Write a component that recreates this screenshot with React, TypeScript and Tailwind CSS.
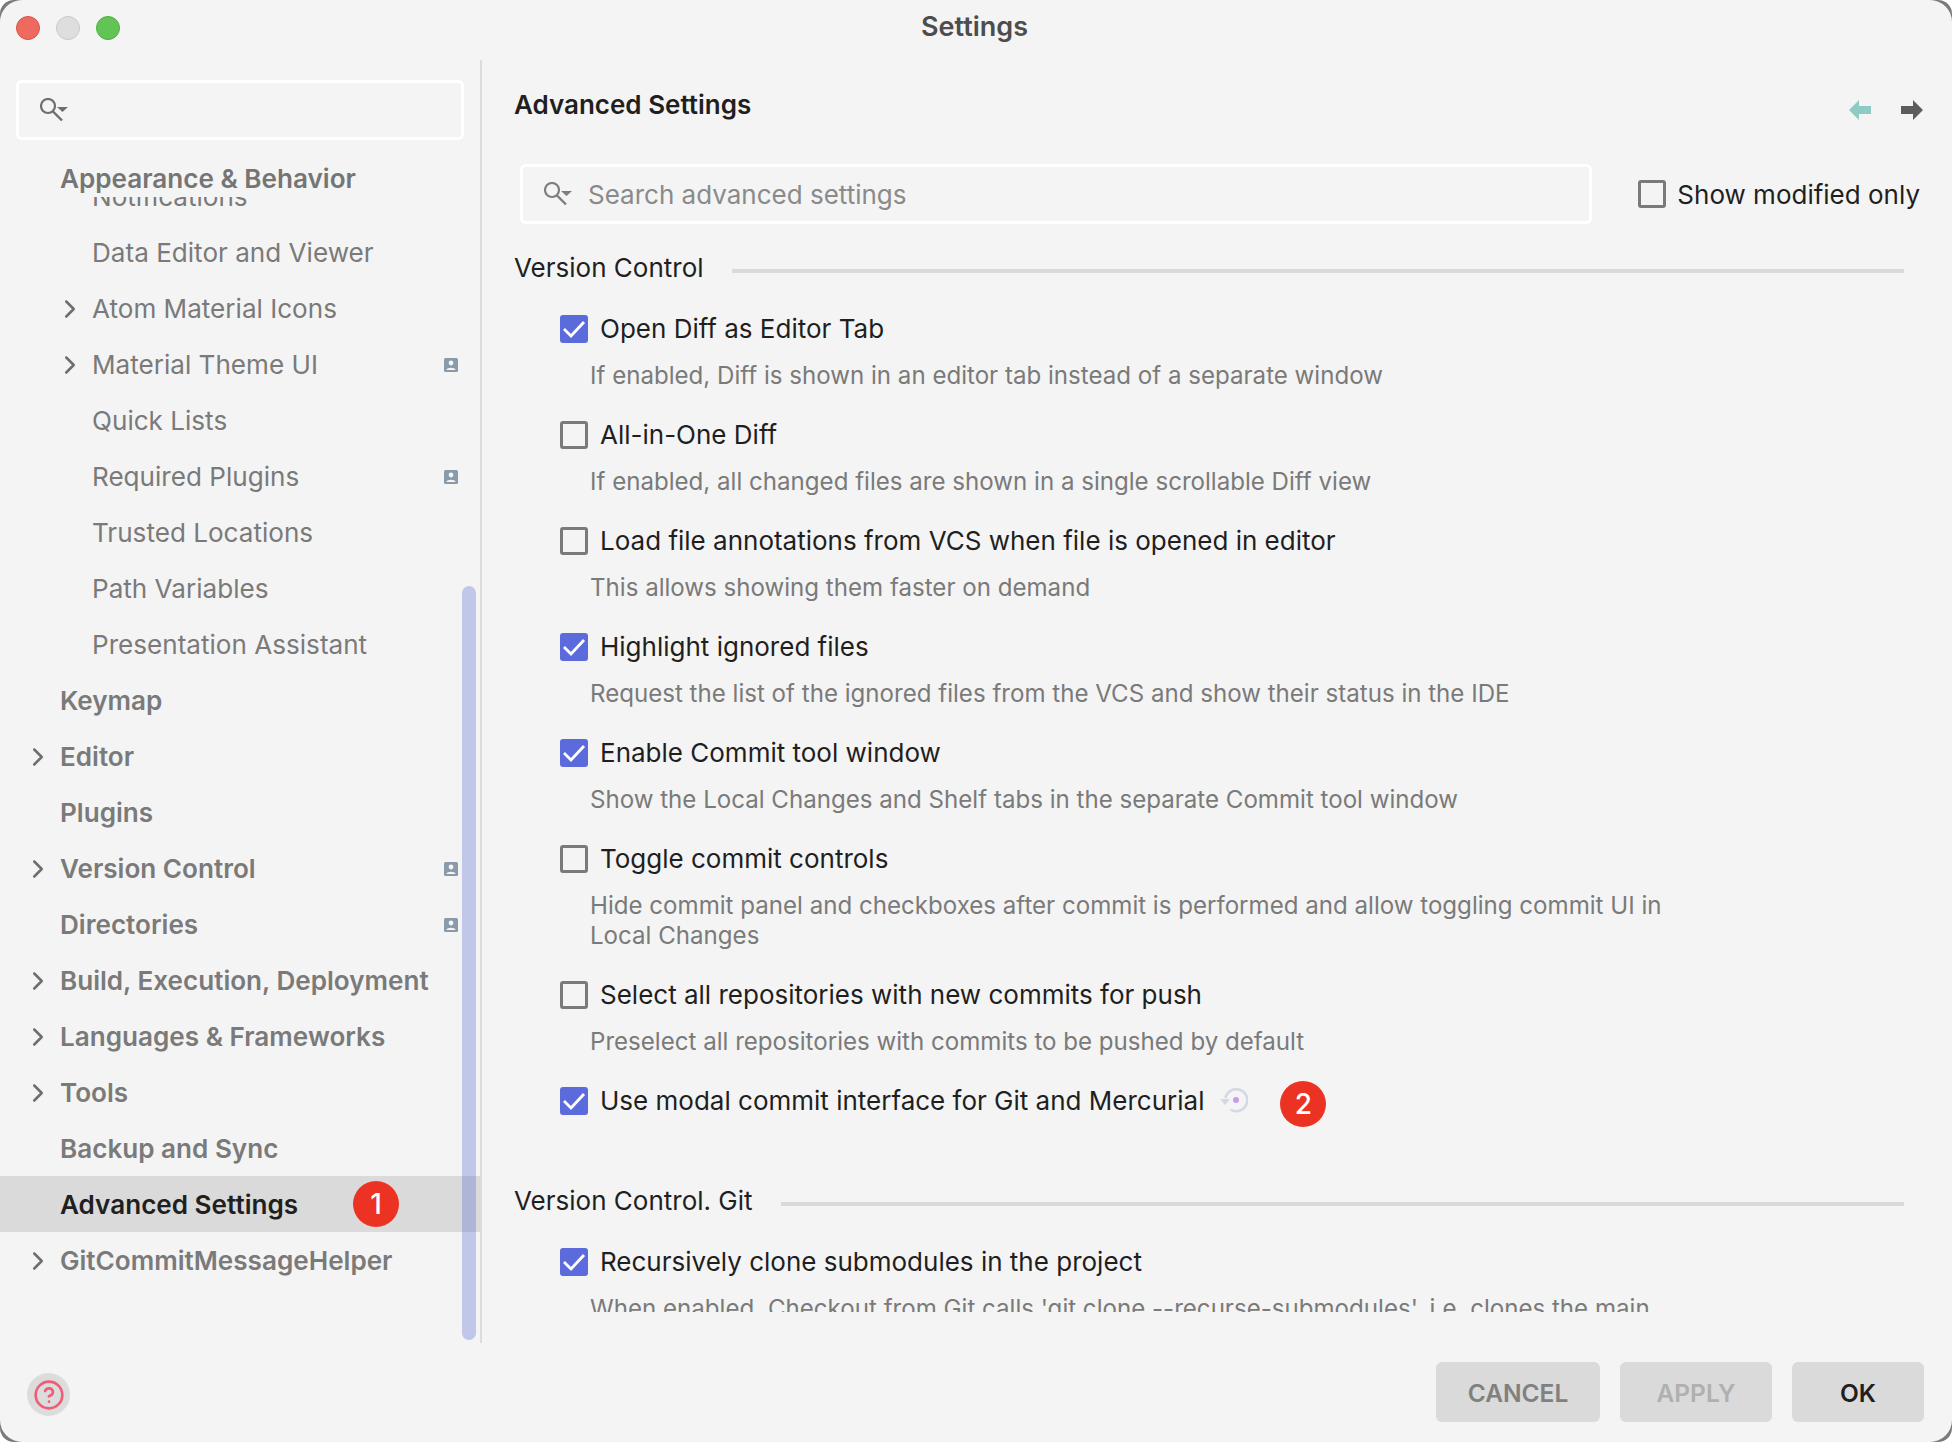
import { Fragment } from "react";
import { ChevronRight, CircleHelp } from "lucide-react";

const FONT = "font-['Inter',sans-serif]";

/* ---------- small drawings ---------- */
function SearchIcon({ color = "#6e6e6e" }: { color?: string }) {
  return (
    <svg width="28" height="24" viewBox="0 0 28 24" fill="none" className="shrink-0">
      <circle cx="8" cy="8" r="7" stroke={color} strokeWidth="2.2" />
      <path d="M12.5 13 L22 22.5" stroke={color} strokeWidth="2.4" />
      <path d="M17 9 H28 L22.5 14 Z" fill={color} />
    </svg>
  );
}

function ProjectBadge() {
  return (
    <svg width="14" height="14" viewBox="0 0 14 14" className="shrink-0">
      <rect width="14" height="14" rx="1.5" fill="#8b9aa8" />
      <circle cx="7" cy="5" r="2.4" fill="#f4f4f4" />
      <path d="M2.5 12 C2.5 9 11.5 9 11.5 12 Z" fill="#f4f4f4" />
    </svg>
  );
}

function Check({ on }: { on: boolean }) {
  if (!on)
    return <span className="w-[28px] h-[28px] shrink-0 rounded-[3px] border-[3px] border-[#7a7a7a]" />;
  return (
    <span className="w-[28px] h-[28px] shrink-0 rounded-[3px] bg-[#5c6bdc]">
      <svg width="28" height="28" viewBox="0 0 28 28" fill="none">
        <path d="M4 14 L11 21 L24 7" stroke="#fff" strokeWidth="2.8" />
      </svg>
    </span>
  );
}

function Marker({ n }: { n: number }) {
  return (
    <span className="w-[46px] h-[46px] shrink-0 rounded-full bg-[#ec3323] text-white text-[28px] leading-none font-medium flex items-center justify-center">
      {n}
    </span>
  );
}

function ResetIcon() {
  return (
    <svg width="28" height="28" viewBox="0 0 28 28" fill="none" className="shrink-0">
      <path d="M5.5 11 A11 11 0 1 1 10.5 22.5" stroke="#d3d8e4" strokeWidth="2.6" />
      <path d="M0 12 H10 L5 18 Z" fill="#d3d8e4" />
      <circle cx="16" cy="13" r="3" fill="#c79bea" />
    </svg>
  );
}

/* ---------- sidebar ---------- */
type NavItem = { label: string; level: 1 | 2; arrow?: boolean; badge?: boolean };

const NAV: NavItem[] = [
  { label: "Data Editor and Viewer", level: 2 },
  { label: "Atom Material Icons", level: 2, arrow: true },
  { label: "Material Theme UI", level: 2, arrow: true, badge: true },
  { label: "Quick Lists", level: 2 },
  { label: "Required Plugins", level: 2, badge: true },
  { label: "Trusted Locations", level: 2 },
  { label: "Path Variables", level: 2 },
  { label: "Presentation Assistant", level: 2 },
  { label: "Keymap", level: 1 },
  { label: "Editor", level: 1, arrow: true },
  { label: "Plugins", level: 1 },
  { label: "Version Control", level: 1, arrow: true, badge: true },
  { label: "Directories", level: 1, badge: true },
  { label: "Build, Execution, Deployment", level: 1, arrow: true },
  { label: "Languages & Frameworks", level: 1, arrow: true },
  { label: "Tools", level: 1, arrow: true },
  { label: "Backup and Sync", level: 1 },
];

function NavRow({ item }: { item: NavItem }) {
  const bold = item.level === 1;
  return (
    <div className={`h-[56px] pt-[2px] flex items-center pr-[22px] text-[#7a7a7a] ${bold ? "pl-[28px] font-semibold" : "pl-[60px]"}`}>
      <span className="w-[32px] shrink-0 flex items-center">
        {item.arrow && <ChevronRight size={30} strokeWidth={2} className="-ml-[5px] shrink-0 text-[#6e6e6e]" />}
      </span>
      <span className="flex-1 whitespace-nowrap">{item.label}</span>
      {item.badge && <ProjectBadge />}
    </div>
  );
}

function Sidebar() {
  return (
    <aside className="relative w-[482px] shrink-0 border-r-2 border-[#dcdcdc] flex flex-col text-[26.1px] leading-[32px]">
      <div className="mx-[16px] mt-[20px] h-[60px] rounded-[6px] border-[3px] border-white flex items-center pl-[21px] shrink-0">
        <SearchIcon />
      </div>
      <div className="pl-[60px] pt-[23px] h-[57px] shrink-0 text-[#757575] font-semibold whitespace-nowrap">Appearance &amp; Behavior</div>
      <div className="flex-1 overflow-hidden">
        {/* list is scrolled: only the foot of this row still shows under the sticky header */}
        <div className="h-[27px] overflow-hidden">
          <div className="-mt-[28px] pl-[92px] h-[56px] flex items-center text-[#7a7a7a]">Notifications</div>
        </div>
        {NAV.map((item) => (
          <NavRow key={item.label} item={item} />
        ))}
        <div className="h-[56px] pl-[60px] pr-[22px] flex items-center gap-[55px] bg-[#dadada] font-semibold text-[#1f1f1f]">
          <span className="pt-[2px] whitespace-nowrap">Advanced Settings</span>
          <Marker n={1} />
        </div>
        <NavRow item={{ label: "GitCommitMessageHelper", level: 1, arrow: true }} />
      </div>
      {/* overlay scrollbar */}
      <div className="absolute right-[4px] top-[526px] bottom-[3px] w-[14px] rounded-full bg-[#4a5fd0]/30" />
    </aside>
  );
}

/* ---------- settings list ---------- */
type Setting = { label: string; on: boolean; desc?: string[]; reset?: boolean };

const VCS: Setting[] = [
  { label: "Open Diff as Editor Tab", on: true, desc: ["If enabled, Diff is shown in an editor tab instead of a separate window"] },
  { label: "All-in-One Diff", on: false, desc: ["If enabled, all changed files are shown in a single scrollable Diff view"] },
  { label: "Load file annotations from VCS when file is opened in editor", on: false, desc: ["This allows showing them faster on demand"] },
  { label: "Highlight ignored files", on: true, desc: ["Request the list of the ignored files from the VCS and show their status in the IDE"] },
  { label: "Enable Commit tool window", on: true, desc: ["Show the Local Changes and Shelf tabs in the separate Commit tool window"] },
  {
    label: "Toggle commit controls",
    on: false,
    desc: ["Hide commit panel and checkboxes after commit is performed and allow toggling commit UI in", "Local Changes"],
  },
  { label: "Select all repositories with new commits for push", on: false, desc: ["Preselect all repositories with commits to be pushed by default"] },
  { label: "Use modal commit interface for Git and Mercurial", on: true, reset: true },
];

function SettingRow({ s }: { s: Setting }) {
  return (
    <div className="pl-[46px] pb-[21px]">
      <div className="flex items-center gap-[12px] h-[46px] text-[#1f1f1f]">
        <Check on={s.on} />
        <span className="whitespace-nowrap">{s.label}</span>
        {s.reset && (
          <Fragment>
            <span className="ml-[4px]"><ResetIcon /></span>
            <span className="ml-[20px] mt-[6px]"><Marker n={2} /></span>
          </Fragment>
        )}
      </div>
      {s.desc && (
        <div className="mt-[9px] pl-[30px] text-[#7a7a7a] text-[24.1px] leading-[30px]">
          {s.desc.map((d) => (
            <div key={d} className="whitespace-nowrap">{d}</div>
          ))}
        </div>
      )}
    </div>
  );
}

function SectionTitle({ title }: { title: string }) {
  return (
    <div className="flex items-center gap-[28px] pr-[48px] h-[40px] mb-[18px] text-[#1f1f1f]">
      <span className="whitespace-nowrap">{title}</span>
      <span className="flex-1 h-[4px] mt-[6px] bg-[#dadada]" />
    </div>
  );
}

function Main() {
  return (
    <main className="flex-1 min-w-0 pl-[32px] flex flex-col text-[26px] leading-[32px]">
      <div className="h-[104px] pr-[29px] flex justify-between shrink-0">
        <h1 className="pt-[29px] font-semibold text-[#1f1f1f]">Advanced Settings</h1>
        <div className="flex items-start gap-[30px] pt-[40px]">
          <svg width="22" height="20" viewBox="0 0 22 20"><path d="M0 10 L10 0 V6 H22 V14 H10 V20 Z" fill="#8ecbc4" /></svg>
          <svg width="22" height="20" viewBox="0 0 22 20"><path d="M22 10 L12 0 V6 H0 V14 H12 V20 Z" fill="#5c5c5c" /></svg>
        </div>
      </div>
      <div className="flex items-center pl-[6px] pr-[32px] shrink-0">
        <div className="w-[1072px] h-[60px] rounded-[6px] border-[3px] border-white flex items-center gap-[16px] pl-[21px] text-[#8a8a8a]">
          <SearchIcon color="#7e7e7e" />
          <span className="pt-[2px]">Search advanced settings</span>
        </div>
        <div className="ml-auto flex items-center gap-[11px] text-[#1f1f1f]">
          <Check on={false} />
          <span className="pt-[2px] whitespace-nowrap">Show modified only</span>
        </div>
      </div>
      <div className="mt-[24px] h-[1064px] overflow-hidden">
        <SectionTitle title="Version Control" />
        {VCS.map((s) => (
          <SettingRow key={s.label} s={s} />
        ))}
        <div className="mt-[36px]">
          <SectionTitle title="Version Control. Git" />
        </div>
        <SettingRow
          s={{
            label: "Recursively clone submodules in the project",
            on: true,
            desc: ["When enabled, Checkout from Git calls 'git clone --recurse-submodules', i.e. clones the main"],
          }}
        />
      </div>
    </main>
  );
}

function Footer() {
  return (
    <footer className="h-[99px] shrink-0 flex justify-between pl-[27px] pr-[28px]">
      <div className="mt-[30px] w-[43px] h-[43px] rounded-full bg-[#dcdcdc] flex items-center justify-center text-[#ee5f77]">
        <CircleHelp size={32} strokeWidth={2} />
      </div>
      <div className="mt-[19px] flex gap-[20px] text-[24.5px] font-semibold">
        <button className="w-[164px] h-[60px] pt-[2px] rounded-[6px] bg-[#dadada] text-[#808080]">CANCEL</button>
        <button className="w-[152px] h-[60px] pt-[2px] rounded-[6px] bg-[#dadada] text-[#b0b0b0]">APPLY</button>
        <button className="w-[132px] h-[60px] pt-[2px] rounded-[6px] bg-[#dadada] text-[#1f1f1f]">OK</button>
      </div>
    </footer>
  );
}

export default function App() {
  return (
    <div className="w-[1952px] h-[1442px] bg-white">
      <div className="w-full h-full rounded-[14px] bg-[#7a7a7a]">
        <div className={`${FONT} w-full h-full bg-[#f4f4f4] rounded-[22px] overflow-hidden flex flex-col`}>
          <header className="relative h-[60px] shrink-0 flex items-center justify-center">
            <div className="absolute left-[16px] top-[16px] flex gap-[16px]">
              <span className="w-[24px] h-[24px] rounded-full bg-[#ee6a5f] border border-[#d9534a]" />
              <span className="w-[24px] h-[24px] rounded-full bg-[#dedede] border border-[#c8c8c8]" />
              <span className="w-[24px] h-[24px] rounded-full bg-[#61c454] border border-[#50ad44]" />
            </div>
            <span className="text-[27px] font-semibold text-[#4d4d4d] -mt-[6px] -ml-[3px]">Settings</span>
          </header>
          <div className="flex-1 min-h-0 flex">
            <Sidebar />
            <Main />
          </div>
          <Footer />
        </div>
      </div>
    </div>
  );
}
